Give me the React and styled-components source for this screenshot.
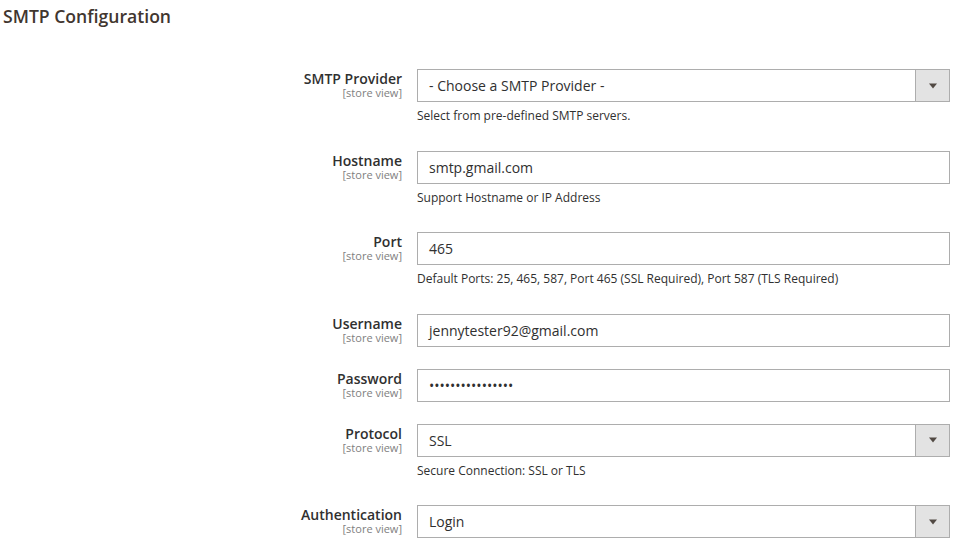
import styled, { createGlobalStyle } from "styled-components"

const GlobalStyle = createGlobalStyle`
  body {
    margin: 0;
    background: #fff;
    font-family: "Open Sans", "Liberation Sans", sans-serif;
    color: #303030;
  }
`

const Page = styled.div`
  padding: 4px 11px 0 3px;
`

const Title = styled.h2`
  margin: 0;
  font-size: 17.6px;
  line-height: 24px;
  font-weight: 600;
  color: #41362f;
`

const Form = styled.div`
  margin-top: 41px;
  display: flex;
  flex-direction: column;
`

const Row = styled.div`
  display: grid;
  grid-template-columns: 399px 1fr;
  column-gap: 15px;
  margin-bottom: 22px;
`

const LabelCol = styled.div`
  text-align: right;
  padding-top: 2px;
`

const Label = styled.div`
  font-size: 14px;
  line-height: 16px;
  font-weight: 600;
  color: #303030;
`

const Scope = styled.div`
  font-size: 11px;
  line-height: 12px;
  color: #808080;
`

const Control = styled.div`
  display: flex;
  height: 33px;
  border: 1px solid #adadad;
  background: #fff;
  box-sizing: border-box;
`

const Value = styled.div`
  flex: 1;
  padding: 0 11px;
  font-size: 14px;
  line-height: 31px;
  color: #303030;
`

const Arrow = styled.div`
  width: 33px;
  border-left: 1px solid #adadad;
  background: #e3e3e3;
  display: flex;
  align-items: center;
  justify-content: center;
`

const Note = styled.div`
  margin: 5px 0 3.5px;
  font-size: 12px;
  line-height: 18px;
  color: #303030;
`

const Caret = () => (
  <svg width="10" height="6" viewBox="0 0 10 6">
    <path d="M1 0.5h8L5 5.5z" fill="#514943" />
  </svg>
)

const fields = [
  { label: "SMTP Provider", value: "- Choose a SMTP Provider -", select: true, note: "Select from pre-defined SMTP servers." },
  { label: "Hostname", value: "smtp.gmail.com", note: "Support Hostname or IP Address" },
  { label: "Port", value: "465", note: "Default Ports: 25, 465, 587, Port 465 (SSL Required), Port 587 (TLS Required)" },
  { label: "Username", value: "jennytester92@gmail.com" },
  { label: "Password", value: "••••••••••••••••" },
  { label: "Protocol", value: "SSL", select: true, note: "Secure Connection: SSL or TLS" },
  { label: "Authentication", value: "Login", select: true },
]

const App = () => {
  return (
    <Page>
      <GlobalStyle />
      <Title>SMTP Configuration</Title>
      <Form>
        {fields.map((f) => (
          <Row key={f.label}>
            <LabelCol>
              <Label>{f.label}</Label>
              <Scope>[store view]</Scope>
            </LabelCol>
            <div>
              <Control>
                <Value>{f.value}</Value>
                {f.select && (
                  <Arrow>
                    <Caret />
                  </Arrow>
                )}
              </Control>
              {f.note && <Note>{f.note}</Note>}
            </div>
          </Row>
        ))}
      </Form>
    </Page>
  )
}

export default App
